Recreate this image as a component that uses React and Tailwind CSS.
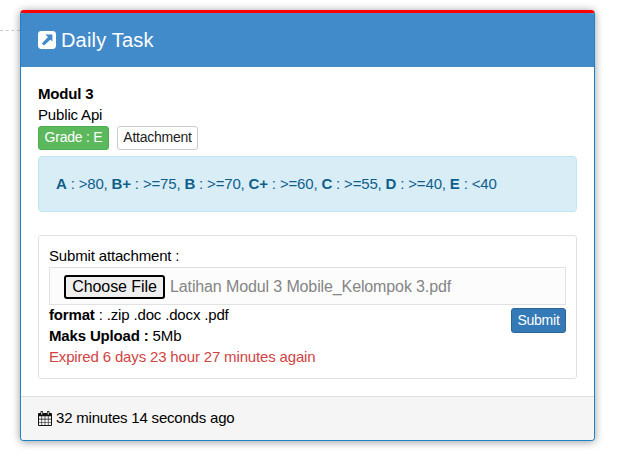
import React from 'react';

const grades = [
  ['A', '>80'],
  ['B+', '>=75'],
  ['B', '>=70'],
  ['C+', '>=60'],
  ['C', '>=55'],
  ['D', '>=40'],
  ['E', '<40'],
];

function ExternalLinkSquare() {
  return (
    <svg className="mr-[5px] h-[18px] w-[18px] shrink-0" viewBox="0 0 18 18" fill="none">
      <rect width="18" height="18" rx="3.4" fill="#fff" />
      <path d="M7.2 3.6H14.4V10.6L12.3 8.7L6 14.5L3.9 12.5L10 6.1Z" fill="#428bca" />
    </svg>
  );
}

function Calendar() {
  return (
    <svg className="mt-[2px] mr-1 h-[15px] w-[14px] shrink-0" viewBox="0 0 14 15" fill="none">
      <path d="M1 2H13A1 1 0 0 1 14 3V14A1 1 0 0 1 13 15H1A1 1 0 0 1 0 14V3A1 1 0 0 1 1 2Z" fill="#111" />
      <rect x="2.5" y="0" width="2.6" height="4.6" rx="1.1" fill="#111" />
      <rect x="8.9" y="0" width="2.6" height="4.6" rx="1.1" fill="#111" />
      <path d="M3.8 1V3.6M10.2 1V3.6" stroke="#f5f5f5" strokeWidth="1" />
      <path
        d="M1 5.2H3.5V7.8H1ZM4.1 5.2H6.7V7.8H4.1ZM7.3 5.2H9.9V7.8H7.3ZM10.5 5.2H13V7.8H10.5ZM1 8.4H3.5V11H1ZM4.1 8.4H6.7V11H4.1ZM7.3 8.4H9.9V11H7.3ZM10.5 8.4H13V11H10.5ZM1 11.6H3.5V14H1ZM4.1 11.6H6.7V14H4.1ZM7.3 11.6H9.9V14H7.3ZM10.5 11.6H13V14H10.5Z"
        fill="#f5f5f5"
      />
    </svg>
  );
}

export default function App() {
  return (
    <div className="flex h-[456px] w-[622px] items-start overflow-hidden bg-white pt-[10px] font-['Liberation_Sans',Arial,sans-serif] text-[15px] leading-[21px] tracking-[-0.16px] text-black">
      <div className="mt-5 w-5 shrink-0 border-t border-dashed border-[#ccc]" />
      <section className="flex h-[431px] w-[575px] flex-col overflow-hidden rounded-[4px] border border-t-[3px] border-[#1c84c6] border-t-[#ff0000] bg-white shadow-[0_1px_8px_rgba(0,0,0,0.4)]">
        <header className="flex h-[54px] shrink-0 items-center bg-[#428bca] pl-[17px] text-[20px] tracking-[0.18px] text-white">
          <ExternalLinkSquare />
          <h1>Daily Task</h1>
        </header>
        <main className="flex flex-1 flex-col px-[17px] pt-4">
          <h2 className="font-bold">Modul 3</h2>
          <p>Public Api</p>
          <div className="mt-px flex h-6 gap-2 text-[14px] leading-[21px] tracking-[-0.24px]">
            <span className="w-[71px] rounded-[3px] border border-[#4cae4c] bg-[#5cb85c] text-center text-white">Grade : E</span>
            <button className="flex w-[81px] justify-center rounded-[3px] border border-[#ccc] bg-white text-[#222]">Attachment</button>
          </div>
          <div className="mt-[6px] flex h-14 items-center rounded-[4px] border border-[#bce8f1] bg-[#d9edf7] pb-[2px] pl-[17px] tracking-[-0.17px] text-[#0f5f8b]">
            <p>
              {grades.map(([name, range], i) => (
                <React.Fragment key={name}>
                  <b>{name}</b> : {range}
                  {i < grades.length - 1 ? ', ' : ''}
                </React.Fragment>
              ))}
            </p>
          </div>
          <div className="mt-[23px] h-36 rounded-[3px] border border-[#e1e1e1] px-[10px] pt-[9px]">
            <p>Submit attachment :</p>
            <div className="mt-px flex h-[38px] items-center border border-[#e1e1e1] bg-[#fcfcfc] pl-[14px] text-[16px] tracking-[-0.12px]">
              <button className="mt-[2px] h-6 w-[101px] rounded-[3px] border-2 border-black bg-[#efefef] leading-5 tracking-[-0.08px]">Choose File</button>
              <span className="ml-[5px] text-[#858585]">Latihan Modul 3 Mobile_Kelompok 3.pdf</span>
            </div>
            <div className="-mt-px flex items-start justify-between">
              <div>
                <p><b>format</b> : .zip .doc .docx .pdf</p>
                <p><b>Maks Upload :</b> 5Mb</p>
                <p className="text-[#d14343]">Expired 6 days 23 hour 27 minutes again</p>
              </div>
              <button className="mt-1 h-[25px] w-[55px] rounded-[3px] border border-[#2e6496] bg-[#337ab7] text-[14px] tracking-[-0.24px] text-white">Submit</button>
            </div>
          </div>
        </main>
        <footer className="flex h-[44px] shrink-0 items-center border-t border-[#ddd] bg-[#f5f5f5] pb-[2px] pl-[17px]">
          <Calendar />
          <span className="tracking-[-0.2px]">32 minutes 14 seconds ago</span>
        </footer>
      </section>
    </div>
  );
}
